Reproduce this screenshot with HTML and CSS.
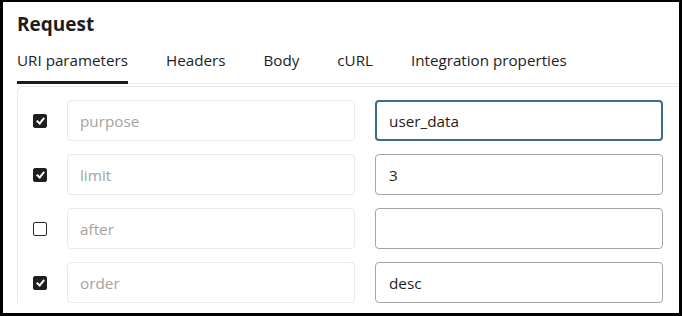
FILE: index.html
```html
<!DOCTYPE html>
<html lang="en">
<head>
  <meta charset="UTF-8">
  <meta name="viewport" content="width=device-width, initial-scale=1.0">
  <title>Request</title>
  <link rel="stylesheet" href="styles.css">
</head>
<body>
  <div class="frame">
    <h1 class="title">Request</h1>

    <div class="tabs">
      <a class="tab active" href="#">URI parameters</a>
      <a class="tab" href="#">Headers</a>
      <a class="tab" href="#">Body</a>
      <a class="tab" href="#">cURL</a>
      <a class="tab" href="#">Integration properties</a>
    </div>

    <div class="params-panel">
      <div class="param-row">
        <span class="check on"></span>
        <input class="param-name" type="text" placeholder="purpose">
        <input class="param-value focused" type="text" value="user_data">
      </div>
      <div class="param-row">
        <span class="check on"></span>
        <input class="param-name" type="text" placeholder="limit">
        <input class="param-value" type="text" value="3">
      </div>
      <div class="param-row">
        <span class="check"></span>
        <input class="param-name" type="text" placeholder="after">
        <input class="param-value" type="text" value="">
      </div>
      <div class="param-row">
        <span class="check on"></span>
        <input class="param-name" type="text" placeholder="order">
        <input class="param-value" type="text" value="desc">
      </div>
    </div>
  </div>
</body>
</html>
```

FILE: styles.css
```css
:root {
  --frame: #000000;
  --text-main: #1d1d1d;
  --text-muted: #a3a3a3;
  --line-light: #e9e9e9;
  --field-border: #a5a5a5;
  --field-focus: #3d6b94;
}

* {
  box-sizing: border-box;
}

html,
body {
  margin: 0;
  height: 100%;
}

body {
  font-family: "Open Sans", "Noto Sans", sans-serif;
  color: var(--text-main);
  background-color: #ffffff;
}

.frame {
  height: 316px;
  width: 682px;
  border-style: solid;
  border-color: var(--frame);
  border-width: 2px 3px 3px 3px;
  padding: 0 0 0 14px;
  overflow: hidden;
  background-color: #ffffff;
}

.title {
  margin: 0;
  padding-top: 9px;
  font-size: 19px;
  line-height: 26px;
  font-weight: 700;
}

.tabs {
  display: flex;
  gap: 38px;
  margin-top: 12px;
  border-bottom: 1px solid var(--line-light);
}

.tab {
  display: block;
  padding: 0 0 10px 0;
  font-size: 15.2px;
  line-height: 22px;
  color: var(--text-main);
  text-decoration: none;
  border-bottom: 3px solid transparent;
  margin-bottom: -1px;
}

.tab.active {
  border-bottom-color: var(--text-main);
}

.params-panel {
  margin-top: 2px;
  border: 1px solid var(--line-light);
  border-right: none;
  border-bottom: none;
  border-radius: 6px 0 0 0;
  padding: 13px 16px 0 15px;
  display: flex;
  flex-direction: column;
  gap: 13px;
}

.param-row {
  display: grid;
  grid-template-columns: 14px 1fr 1fr;
  column-gap: 20px;
  align-items: center;
}

.check {
  display: block;
  width: 14px;
  height: 14px;
  border: 1.5px solid #2a2a2a;
  border-radius: 2px;
  background-color: #ffffff;
  position: relative;
}

.check.on {
  background-color: #1f1f1f;
  border-color: #1f1f1f;
}

.check.on::after {
  content: "";
  position: absolute;
  left: 3.5px;
  top: 1px;
  width: 3px;
  height: 6px;
  border-right: 2px solid #ffffff;
  border-bottom: 2px solid #ffffff;
  transform: rotate(40deg);
}

.param-name,
.param-value {
  height: 41px;
  width: 100%;
  margin: 0;
  padding: 0 12px;
  font-family: "Open Sans", "Noto Sans", sans-serif;
  font-size: 15.3px;
  color: var(--text-main);
  border-radius: 4px;
  outline: none;
  background-color: #ffffff;
}

.param-name {
  border: 1px solid var(--line-light);
}

.param-name::placeholder {
  color: var(--text-muted);
}

.param-value {
  border: 1px solid var(--field-border);
  padding-left: 13px;
}

.param-value.focused {
  border: 2px solid var(--field-focus);
  padding-left: 12px;
}
```
